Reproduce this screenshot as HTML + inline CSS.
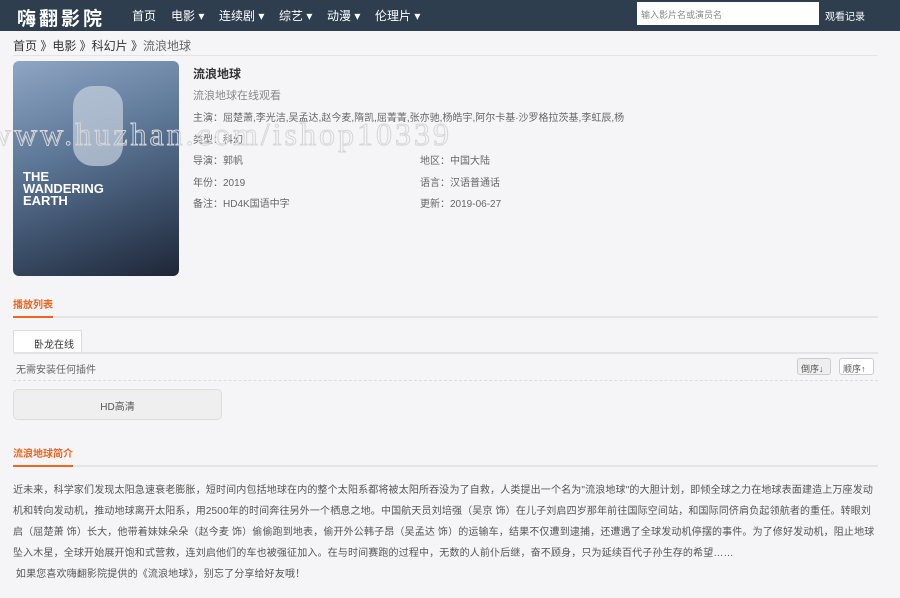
<!DOCTYPE html><html><head><meta charset="utf-8"><style>
*{margin:0;padding:0;box-sizing:border-box}
body{width:900px;height:598px;background:#f5f5f7;font-family:"Liberation Sans","Noto Sans CJK SC",sans-serif;color:#333;overflow:hidden;position:relative;font-size:10px}
.hd{height:31px;background:#2e3e4e;position:relative;color:#fff}
.logo{position:absolute;left:17px;top:4px;font-size:19px;font-weight:bold;letter-spacing:3px}
.nav span{position:absolute;top:7px;font-size:12px}
.srch{position:absolute;left:637px;top:2px;width:182px;height:23px;background:#fff;color:#888;font-size:9px;padding:6px 4px}
.rec{position:absolute;left:825px;top:8px;font-size:10px}
.a{position:absolute;white-space:nowrap}
.bc{left:13px;top:37px;font-size:12px;color:#333}
.line{position:absolute;height:2px;background:#e4e4e6}
.or{position:absolute;height:2px;background:#f0641e}
.poster{left:13px;top:61px;width:166px;height:215px;border-radius:6px;background:linear-gradient(160deg,#8fa6c4 0%,#5d7797 40%,#3c4f69 70%,#1e2637 100%);overflow:hidden}
.k{color:#666;font-size:10px}
.ti{color:#f0641e;font-size:10px;font-weight:bold}
</style></head><body>
<div class="hd"><div class="logo">嗨翻影院</div>
<div class="nav"><span style="left:132px">首页</span><span style="left:171px">电影 ▾</span><span style="left:219px">连续剧 ▾</span><span style="left:279px">综艺 ▾</span><span style="left:327px">动漫 ▾</span><span style="left:375px">伦理片 ▾</span></div>
<div class="srch">输入影片名或演员名</div><div class="rec">观看记录</div></div>
<div class="a bc">首页 》电影 》科幻片 》<span style="color:#666">流浪地球</span></div>
<div class="line" style="left:13px;top:55px;width:865px;height:1px"></div>
<div class="a poster"><div style="position:absolute;left:10px;top:110px;color:#fff;font-size:13px;font-weight:bold;line-height:12px">THE<br>WANDERING<br>EARTH</div><div style="position:absolute;left:60px;top:25px;width:50px;height:80px;border-radius:20px;background:#c8d2de;opacity:.7"></div></div>
<div class="a" style="left:193px;top:65px;font-size:12px;font-weight:bold">流浪地球</div>
<div class="a" style="left:193px;top:87px;font-size:11px;color:#888">流浪地球在线观看</div>
<div class="a k" style="left:193px;top:109px">主演：屈楚萧,李光洁,吴孟达,赵今麦,隋凯,屈菁菁,张亦驰,杨皓宇,阿尔卡基·沙罗格拉茨基,李虹辰,杨</div>
<div class="a k" style="left:193px;top:131px">类型：科幻</div>
<div class="a" style="left:-12px;top:116px;font-size:32px;letter-spacing:3px;color:transparent;-webkit-text-stroke:1px #d6d6d6;font-family:'Liberation Serif',serif">www.huzhan.com/ishop10339</div>
<div class="a k" style="left:193px;top:152px">导演：郭帆</div><div class="a k" style="left:420px;top:152px">地区：中国大陆</div>
<div class="a k" style="left:193px;top:174px">年份：2019</div><div class="a k" style="left:420px;top:174px">语言：汉语普通话</div>
<div class="a k" style="left:193px;top:195px">备注：HD4K国语中字</div><div class="a k" style="left:420px;top:195px">更新：2019-06-27</div>
<div class="a ti" style="left:13px;top:296px">播放列表</div>
<div class="line" style="left:13px;top:316px;width:865px"></div><div class="or" style="left:13px;top:316px;width:40px"></div>
<div class="a" style="left:13px;top:330px;width:69px;height:23px;background:#fff;border:1px solid #ddd;border-bottom:none;padding:5px 0 0 20px;font-size:10px">卧龙在线</div>
<div class="line" style="left:13px;top:352px;width:865px"></div>
<div class="a k" style="left:16px;top:361px">无需安装任何插件</div>
<div class="a" style="left:797px;top:358px;width:34px;height:17px;border:1px solid #ccc;background:#eee;border-radius:3px;font-size:9px;padding:3px 3px;color:#555">倒序↓</div>
<div class="a" style="left:839px;top:358px;width:35px;height:17px;border:1px solid #ccc;background:#fff;border-radius:3px;font-size:9px;padding:3px 3px;color:#555">顺序↑</div>
<div class="a" style="left:13px;top:380px;width:865px;border-top:1px dashed #ddd"></div>
<div class="a" style="left:13px;top:389px;width:209px;height:31px;background:#efefef;border:1px solid #ddd;border-radius:5px;text-align:center;padding-top:8px;color:#555;font-size:10px">HD高清</div>
<div class="a ti" style="left:13px;top:445px">流浪地球简介</div>
<div class="line" style="left:13px;top:465px;width:865px"></div><div class="or" style="left:13px;top:465px;width:60px"></div>
<div class="a" style="left:13px;top:480px;width:866px;white-space:normal;font-size:10px;letter-spacing:0.15px;line-height:21px;color:#555">近未来，科学家们发现太阳急速衰老膨胀，短时间内包括地球在内的整个太阳系都将被太阳所吞没为了自救，人类提出一个名为"流浪地球"的大胆计划，即倾全球之力在地球表面建造上万座发动机和转向发动机，推动地球离开太阳系，用2500年的时间奔往另外一个栖息之地。中国航天员刘培强（吴京 饰）在儿子刘启四岁那年前往国际空间站，和国际同侪肩负起领航者的重任。转眼刘启（屈楚萧 饰）长大，他带着妹妹朵朵（赵今麦 饰）偷偷跑到地表，偷开外公韩子昂（吴孟达 饰）的运输车，结果不仅遭到逮捕，还遭遇了全球发动机停摆的事件。为了修好发动机，阻止地球坠入木星，全球开始展开饱和式营救，连刘启他们的车也被强征加入。在与时间赛跑的过程中，无数的人前仆后继，奋不顾身，只为延续百代子孙生存的希望……<br>&nbsp;如果您喜欢嗨翻影院提供的《流浪地球》，别忘了分享给好友哦！</div>
</body></html>
